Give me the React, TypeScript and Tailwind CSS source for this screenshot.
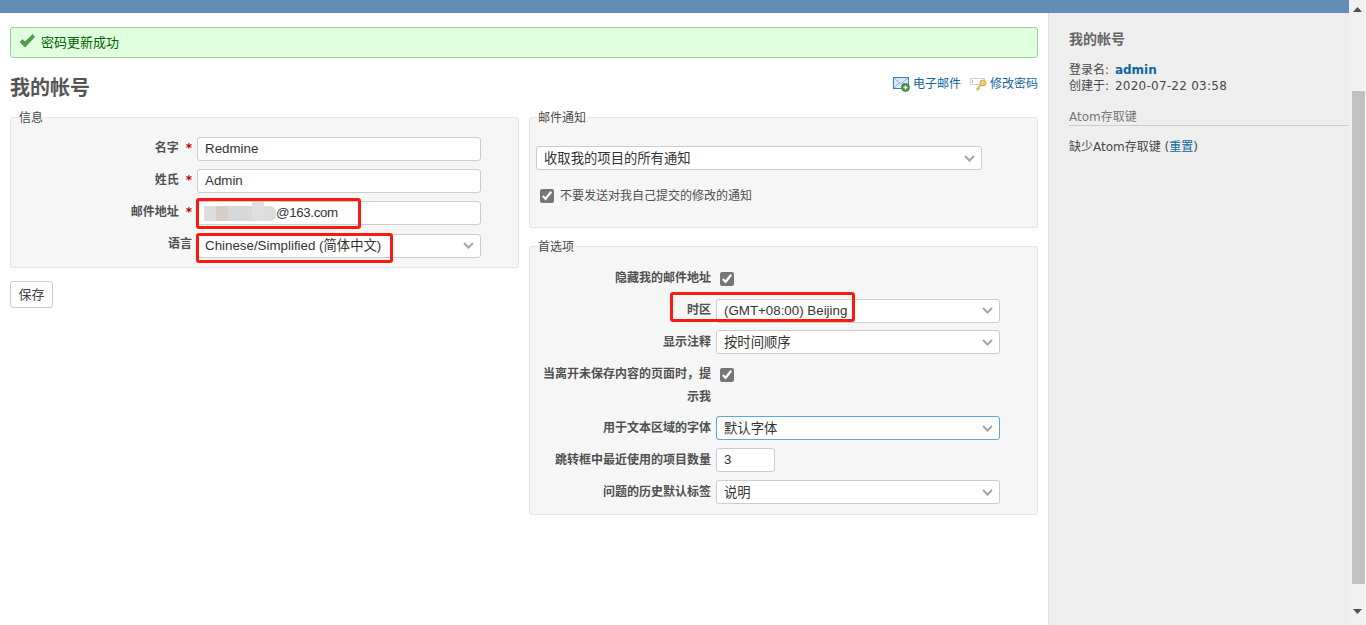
const sans = "font-['DejaVu_Sans','Noto_Sans_CJK_SC',sans-serif]";
const inputFont = "font-['Liberation_Sans','Noto_Sans_CJK_SC',sans-serif] text-[13.33px] text-[#333]";

function Chevron() {
  return (
    <svg className="pointer-events-none absolute right-[7px] top-[9px]" width="11" height="7" viewBox="0 0 11 7" fill="none">
      <path d="M1 1l4.5 4.5L10 1" stroke="#a6a6a6" strokeWidth="2" />
    </svg>
  );
}

function Select({ value, width, focus, cjk }: { value: string; width: string; focus?: boolean; cjk?: boolean }) {
  return (
    <div className={`relative h-6 ${width}`}>
      <select
        defaultValue={value}
        className={`h-6 w-full appearance-none rounded-[3px] border bg-white pl-[7px] pr-5 ${inputFont} ${cjk ? "pt-[2px]" : ""} ${focus ? "border-[#5ba8dc]" : "border-[#ccc]"}`}
      >
        <option>{value}</option>
      </select>
      <Chevron />
    </div>
  );
}

function TextInput({ value, width }: { value: string; width: string }) {
  return (
    <input
      defaultValue={value}
      className={`h-6 rounded-[3px] border border-[#ccc] bg-white pl-[7px] pb-[2px] ${inputFont} ${width}`}
    />
  );
}

function Check() {
  return <input type="checkbox" defaultChecked className="m-0 size-[14px] accent-[#767676]" />;
}

function Row({ label, required, children }: { label: string; required?: boolean; children: React.ReactNode }) {
  return (
    <div className="flex items-center gap-[5px]">
      <label className="mb-[2px] w-[170px] text-right text-[12px] font-bold text-[#505050]">
        {label}
        {required && <span className="ml-[7px] text-[#bb0000]">*</span>}
      </label>
      {children}
    </div>
  );
}

function PrefRow({ label, first, children }: { label: string; first?: boolean; children: React.ReactNode }) {
  return (
    <div className="flex items-start gap-[5px]">
      <label className={`w-[170px] text-right text-[12px] font-bold leading-[23px] text-[#505050] ${first ? "" : "-mb-px pt-px"}`}>{label}</label>
      {children}
    </div>
  );
}

function Box({ title, className, children }: { title: string; className?: string; children: React.ReactNode }) {
  return (
    <fieldset className={`rounded-[3px] border border-[#e4e4e4] bg-[#f6f6f6] ${className ?? ""}`}>
      <legend className="ml-[7px] px-px pt-[2px] text-[12px] leading-[14px] text-[#484848]">{title}</legend>
      {children}
    </fieldset>
  );
}

function MailIcon() {
  return (
    <svg width="17" height="15" viewBox="0 0 17 15">
      <rect x="0.5" y="0.5" width="15" height="11" fill="#dbe9f7" stroke="#3f7fbf" />
      <path d="M1 1l7 6 7-6M1 11l5-5M15 11l-5-5" fill="none" stroke="#7fa9d6" />
      <circle cx="12.5" cy="10.5" r="4" fill="#3f9a3f" stroke="#2b6e2b" strokeWidth="0.6" />
      <path d="M12.5 8.5v4M10.5 10.5h4" stroke="#fff" strokeWidth="1.3" />
    </svg>
  );
}

function KeyIcon() {
  return (
    <svg width="17" height="14" viewBox="0 0 17 14">
      <rect x="0.5" y="1.5" width="14" height="6" fill="#fff" stroke="#cfcfcf" />
      <path d="M2.5 3v3" stroke="#aaa" />
      <circle cx="13" cy="6" r="3" fill="#f4c978" stroke="#d6a650" />
      <path d="M11 8L6.5 12.5M7 12l1.5 1.5M8.5 10.5L10 12" stroke="#e0b25c" strokeWidth="1.6" fill="none" />
    </svg>
  );
}

// red marks drawn on the screenshot by its author
function Mark({ className }: { className: string }) {
  return <div className={`pointer-events-none absolute rounded-[3px] border-[3px] border-[#fb1a12] ${className}`} />;
}

export default function App() {
  return (
    <div className={`relative flex h-[625px] w-[1366px] overflow-hidden bg-white ${sans}`}>
      <div className="flex min-w-0 flex-1 flex-col">
        <div className="h-[13px] shrink-0 bg-[#628db6]" />
        <div className="flex flex-1">
          <main className="w-[1048px] shrink-0 px-[10px] pt-[14px]">
            <div className="flex h-[31px] items-center rounded-[3px] border border-[#9fcf9f] bg-[#dfffdf] pl-2 text-[13px] text-[#005f00]">
              <svg width="16" height="14" viewBox="0 0 16 14" className="mb-[3px]">
                <path d="M1 8l2.5-2.5L6 8l7.5-7.5L15.5 3 6 13z" fill="#4f9f4f" stroke="#2f7f2f" strokeWidth="0.6" />
              </svg>
              <span className="ml-[6px]">密码更新成功</span>
            </div>

            <div className="mt-[14px] flex h-[32px] items-center justify-between">
              <h2 className="text-[20px] font-bold text-[#555]">我的帐号</h2>
              <div className="mb-2 flex items-center text-[12px] text-[#169]">
                <MailIcon />
                <a className="ml-[3px]">电子邮件</a>
                <span className="ml-[9px]"><KeyIcon /></span>
                <a className="ml-[3px]">修改密码</a>
              </div>
            </div>

            <div className="mt-[5px] grid grid-cols-[509px_509px] gap-x-[10px]">
              <div>
                <Box title="信息" className="h-[159px]">
                  <div className="flex flex-col gap-2 pl-[11px] pt-[12px]">
                    <Row label="名字" required><TextInput value="Redmine" width="w-[284px]" /></Row>
                    <Row label="姓氏" required><TextInput value="Admin" width="w-[284px]" /></Row>
                    <Row label="邮件地址" required>
                      <div className={`flex h-6 w-[284px] items-center rounded-[3px] border border-[#ccc] bg-white pl-[6px] ${inputFont}`}>
                        <span className="h-[15px] w-[12px] bg-[#dcdcdc]" />
                        <span className="h-[15px] w-[12px] bg-[#d4cdc8]" />
                        <span className="h-[15px] w-[24px] bg-[#d7d8da]" />
                        <span className="mb-1 h-[19px] w-[12px] bg-[#e2dedc]" />
                        <span className="h-[15px] w-[12px] rounded-r-[6px] bg-[#dcdcdc]" />
                        <span className="tracking-[-0.35px]">@163.com</span>
                      </div>
                    </Row>
                    <Row label="语言"><Select value="Chinese/Simplified (简体中文)" width="w-[284px]" /></Row>
                  </div>
                </Box>
                <button className="mt-[13px] h-[27px] w-[43px] rounded-[3px] border border-[#ccc] bg-white text-[13px] text-[#444]">保存</button>
              </div>

              <div className="flex flex-col gap-[10px]">
                <Box title="邮件通知" className="h-[119px]">
                  <div className="pl-[6px] pt-[21px]">
                    <Select value="收取我的项目的所有通知" width="w-[446px]" cjk />
                    <div className="ml-1 mt-[17px] flex items-center gap-[6px] text-[12px] text-[#505050]">
                      <Check />
                      <span>不要发送对我自己提交的修改的通知</span>
                    </div>
                  </div>
                </Box>
                <Box title="首选项" className="h-[277px]">
                  <div className="flex flex-col gap-2 pl-[11px] pt-[13px]">
                    <PrefRow label="隐藏我的邮件地址" first><span className="mt-[2px] h-[16px] pl-[4px]"><Check /></span></PrefRow>
                    <PrefRow label="时区"><Select value="(GMT+08:00) Beijing" width="w-[284px]" /></PrefRow>
                    <PrefRow label="显示注释"><Select value="按时间顺序" width="w-[284px]" cjk /></PrefRow>
                    <PrefRow label="当离开未保存内容的页面时，提示我"><span className="mt-[3px] h-[16px] pl-[4px]"><Check /></span></PrefRow>
                    <PrefRow label="用于文本区域的字体"><Select value="默认字体" width="w-[284px]" focus cjk /></PrefRow>
                    <PrefRow label="跳转框中最近使用的项目数量"><TextInput value="3" width="w-[59px]" /></PrefRow>
                    <PrefRow label="问题的历史默认标签"><Select value="说明" width="w-[284px]" cjk /></PrefRow>
                  </div>
                </Box>
              </div>
            </div>
          </main>

          <aside className="flex-1 border-l border-[#dddddd] bg-[#eeeeee] pl-[20px] pt-[17px] text-[12px] text-[#484848]">
            <h3 className="text-[14px] font-bold leading-[18px] text-[#666]">我的帐号</h3>
            <p className="mt-[14px] leading-4">
              <span className="mr-[2px]">登录名:</span> <a className="font-bold text-[#169]">admin</a>
              <br />
              <span className="mr-[2px]">创建于:</span> <span className="tracking-[0.25px]">2020-07-22 03:58</span>
            </p>
            <h4 className="mt-[16px] border-b border-[#cccccc] text-[12px] leading-[15px] text-[#777]">Atom存取键</h4>
            <p className="mt-[13px] leading-4">
              缺少Atom存取键 (<a className="text-[#169]">重置</a>)
            </p>
          </aside>
        </div>
      </div>

      {/* scrollbar */}
      <div className="flex w-[17px] shrink-0 flex-col items-center bg-[#f1f1f1]">
        <svg width="9" height="5" viewBox="0 0 9 5" className="mt-[7px]"><path d="M4.5 0L9 5H0z" fill="#505050" /></svg>
        <div className="ml-px mt-[79px] h-[493px] w-[13px] bg-[#c1c1c1]" />
        <svg width="9" height="5" viewBox="0 0 9 5" className="mt-[25px]"><path d="M0 0h9L4.5 5z" fill="#505050" /></svg>
      </div>

      <Mark className="left-[196px] top-[198px] h-[31px] w-[165px]" />
      <Mark className="left-[196px] top-[233px] h-[30px] w-[197px]" />
      <Mark className="left-[670px] top-[292px] h-[30px] w-[185px]" />
    </div>
  );
}
